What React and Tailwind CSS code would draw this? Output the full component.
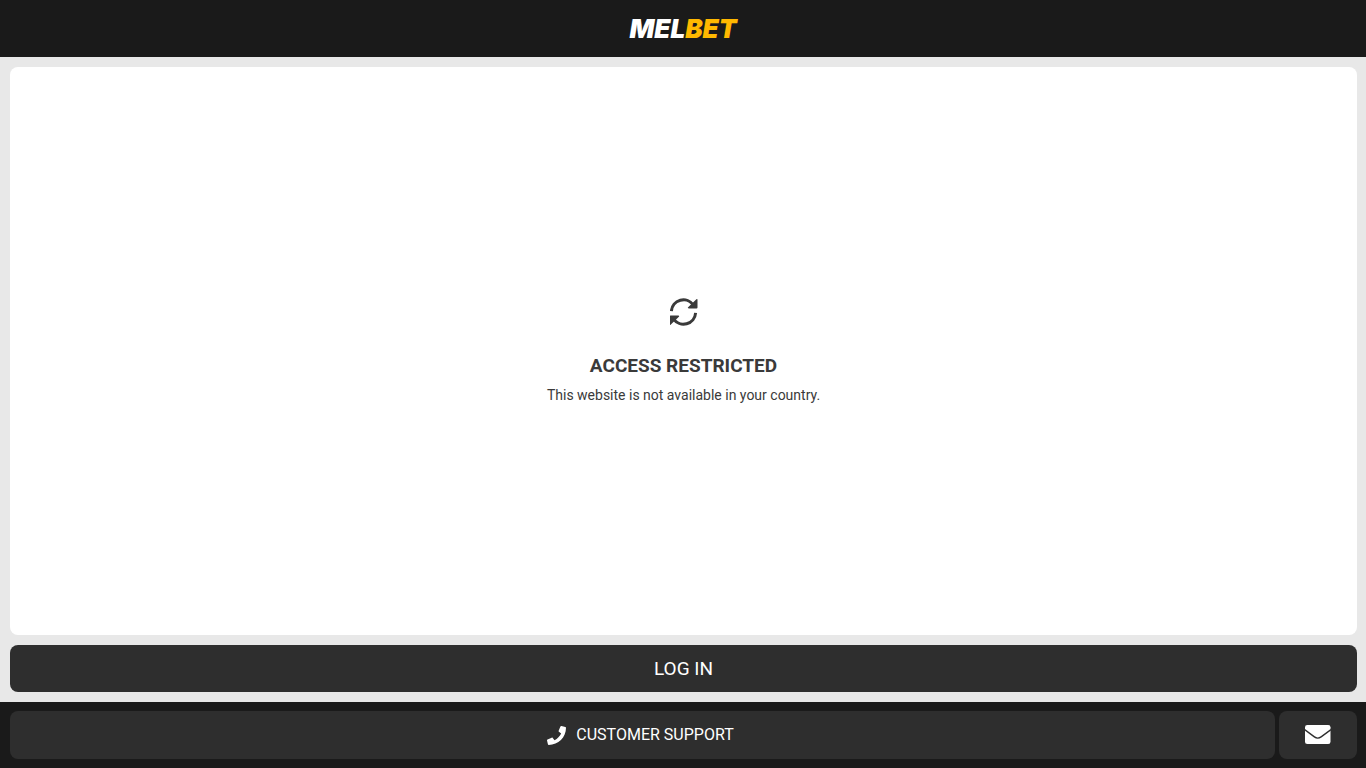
import { FaPhone } from 'react-icons/fa';

function Logo() {
  return (
    <a href="#" aria-label="MELBET" className="flex font-[Inter,sans-serif] text-[26px] leading-none font-black italic">
      <span className="text-white">MEL</span>
      <span className="text-[#ffb800]">BET</span>
    </a>
  );
}

function SyncIcon() {
  return (
    <svg className="size-7" viewBox="0 0 28 28" aria-hidden="true">
      <g fill="none" stroke="currentColor" strokeWidth="3">
        <path d="M1.4 13.2A12.1 12.1 0 0 1 23.5 7.2" />
        <path d="M25.6 14.8A12.1 12.1 0 0 1 3.5 20.8" />
      </g>
      <path
        fill="currentColor"
        d="M26.4 1.2Q27.5 .6 27.5 1.8V9.4Q27.5 10.4 26.5 10.4H18.7Q17.3 10.2 18.1 9.2ZM.6 26.8Q-.5 27.4 -.5 26.2V18.6Q-.5 17.6 .5 17.6H8.3Q9.7 17.8 8.9 18.8Z"
      />
    </svg>
  );
}

function EnvelopeIcon() {
  return (
    <svg className="h-5 w-[26px]" viewBox="0 0 26 20" aria-hidden="true">
      <rect width="25.5" height="19" rx="2.3" fill="currentColor" />
      <path
        d="M-.5 4.6L9.4 11.9Q12.75 14.3 16.1 11.9L26 4.6"
        fill="none"
        stroke="#2e2e2e"
        strokeWidth="1.4"
      />
    </svg>
  );
}

export default function App() {
  return (
    <div className="flex min-h-screen flex-col bg-[#e8e8e8] font-[Roboto,sans-serif] text-[#3a3a3a]">
      <header className="flex h-[57px] items-center justify-center bg-[#1a1a1a]">
        <Logo />
      </header>

      <main className="flex flex-1 flex-col gap-[10px] py-[10px] pr-[9px] pl-[10px]">
        <section className="flex flex-1 flex-col items-center justify-center rounded-lg bg-white text-center">
          <SyncIcon />
          <h1 className="mt-7 text-[19px] leading-6 font-bold">ACCESS RESTRICTED</h1>
          <p className="mt-2 text-sm leading-[18px]">This website is not available in your country.</p>
        </section>

        <button type="button" className="h-[47px] rounded-lg bg-[#2e2e2e] text-[19px] leading-6 text-white">
          LOG IN
        </button>
      </main>

      <footer className="flex gap-1 bg-[#1a1a1a] py-[9px] pr-[9px] pl-[10px]">
        <a
          href="#"
          className="flex h-12 flex-1 items-center justify-center gap-[10px] rounded-lg bg-[#2e2e2e] pr-1 text-base text-white"
        >
          <FaPhone className="size-[19px]" />
          CUSTOMER SUPPORT
        </a>
        <a
          href="#"
          aria-label="Email"
          className="flex h-12 w-[78px] items-center justify-center rounded-lg bg-[#2e2e2e] text-white"
        >
          <EnvelopeIcon />
        </a>
      </footer>
    </div>
  );
}
